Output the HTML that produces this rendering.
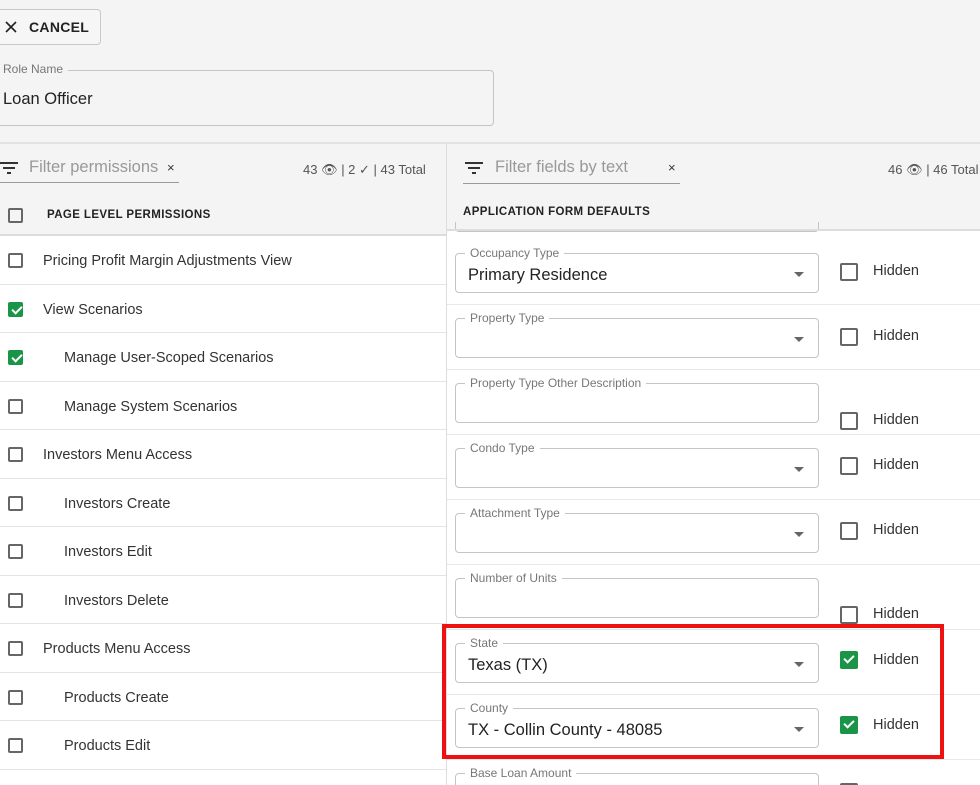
<!DOCTYPE html>
<html style="width:980px;height:785px;overflow:hidden"><head><meta charset="utf-8"><style>
*{box-sizing:border-box;margin:0;padding:0}
body{width:980px;height:785px;overflow:hidden;background:#f4f4f4;font-family:"Liberation Sans",Arial,sans-serif;color:#222;position:relative}
.a{position:absolute}
.cb{position:absolute;width:16px;height:16px;border:2px solid #666;border-radius:2px;background:#fff}
.cb.on{background:#1a9446;border-color:#1a9446}
.cb.on::after{content:"";position:absolute;left:4px;top:0px;width:4px;height:8px;border:solid #fff;border-width:0 2px 2px 0;transform:rotate(45deg)}
.row{position:absolute;left:0;width:446px;height:48.5px;background:#fff;border-bottom:1px solid #e4e4e4;font-size:14.5px;color:#333}
.row span{position:absolute;top:17px}
.row .cb{left:8px;top:17px;width:15px;height:15px}
.rrow{position:absolute;left:447px;width:533px;height:65px;background:#fff;border-bottom:1px solid #e8e8e8}
.fld{position:absolute;left:8px;top:13px;width:364px;height:40px;border:1px solid #c4c4c4;border-radius:4px}
.fld label{position:absolute;left:9px;top:-8px;font-size:12px;color:#777;background:#fff;padding:0 5px;line-height:14px}
.fld .v{position:absolute;left:12px;top:12px;font-size:16.5px;color:#222}
.fld .ar{position:absolute;right:14px;top:18px;width:0;height:0;border-left:5px solid transparent;border-right:5px solid transparent;border-top:5px solid #666}
.rrow .cb{left:393px;width:18px;height:18px}
.hid{position:absolute;left:426px;font-size:14.5px;color:#333}
</style></head><body>
<div class="a" style="left:-10px;top:9px;width:111px;height:36px;border:1px solid #c8c8c8;border-radius:4px;background:#f6f6f6"></div>
<svg class="a" style="left:5px;top:21px" width="12" height="12"><path d="M1 1L11 11M11 1L1 11" stroke="#222" stroke-width="1.6"/></svg>
<div class="a" style="left:29px;top:19px;font-size:14px;font-weight:bold;letter-spacing:.3px;color:#222">CANCEL</div>
<div class="a" style="left:-10px;top:70px;width:504px;height:56px;border:1px solid #c4c4c4;border-radius:4px"></div>
<div class="a" style="left:0;top:62px;font-size:12px;color:#777;background:#f4f4f4;padding:0 5px 0 3px">Role Name</div>
<div class="a" style="left:3px;top:90px;font-size:16.5px;color:#222">Loan Officer</div>
<div class="a" style="left:0;top:142px;width:980px;height:2px;background:#e2e2e2"></div>

<svg class="a" style="left:0;top:161px" width="20" height="14"><path d="M0 2H18M3 7H15M7 12H11" stroke="#333" stroke-width="2"/></svg>
<div class="a" style="left:29px;top:158px;font-size:16.5px;color:#999">Filter permissions</div>
<div class="a" style="left:167px;top:160px;font-size:13px;color:#333">×</div>
<div class="a" style="left:0;top:182px;width:179px;height:1px;background:#999"></div>
<div class="a" style="left:303px;top:162px;font-size:13px;color:#555;white-space:nowrap">43 👁 | 2 ✓ | 43 Total</div>
<div class="cb" style="left:8px;top:208px;width:15px;height:15px;background:none"></div>
<div class="a" style="left:47px;top:209px;font-size:11.5px;font-weight:bold;letter-spacing:.4px;color:#222">PAGE LEVEL PERMISSIONS</div>
<div class="a" style="left:0;top:234px;width:446px;height:2px;background:#ddd"></div>

<div class="row" style="top:236px"><div class="cb"></div><span style="left:43px">Pricing Profit Margin Adjustments View</span></div>
<div class="row" style="top:284.5px"><div class="cb on"></div><span style="left:43px">View Scenarios</span></div>
<div class="row" style="top:333px"><div class="cb on"></div><span style="left:64px">Manage User-Scoped Scenarios</span></div>
<div class="row" style="top:381.5px"><div class="cb"></div><span style="left:64px">Manage System Scenarios</span></div>
<div class="row" style="top:430px"><div class="cb"></div><span style="left:43px">Investors Menu Access</span></div>
<div class="row" style="top:478.5px"><div class="cb"></div><span style="left:64px">Investors Create</span></div>
<div class="row" style="top:527px"><div class="cb"></div><span style="left:64px">Investors Edit</span></div>
<div class="row" style="top:575.5px"><div class="cb"></div><span style="left:64px">Investors Delete</span></div>
<div class="row" style="top:624px"><div class="cb"></div><span style="left:43px">Products Menu Access</span></div>
<div class="row" style="top:672.5px"><div class="cb"></div><span style="left:64px">Products Create</span></div>
<div class="row" style="top:721px"><div class="cb"></div><span style="left:64px">Products Edit</span></div>
<div class="row" style="top:769.5px;height:15.5px;border:none"></div>

<div class="a" style="left:446px;top:144px;width:1px;height:641px;background:#ddd"></div>
<svg class="a" style="left:465px;top:161px" width="20" height="14"><path d="M0 2H18M3 7H15M7 12H11" stroke="#333" stroke-width="2"/></svg>
<div class="a" style="left:495px;top:158px;font-size:16.5px;color:#999">Filter fields by text</div>
<div class="a" style="left:668px;top:160px;font-size:13px;color:#333">×</div>
<div class="a" style="left:463px;top:183px;width:217px;height:1px;background:#999"></div>
<div class="a" style="left:888px;top:162px;font-size:13px;color:#555;white-space:nowrap">46 👁 | 46 Total</div>
<div class="a" style="left:463px;top:206px;font-size:11.5px;font-weight:bold;letter-spacing:.4px;color:#222">APPLICATION FORM DEFAULTS</div>
<div class="a" style="left:447px;top:229px;width:533px;height:11px;background:#fff"></div>
<div class="a" style="left:455px;top:222px;width:364px;height:10px;border:1px solid #c4c4c4;border-top:none;border-radius:0 0 4px 4px"></div>
<div class="a" style="left:447px;top:229px;width:533px;height:2px;background:#ddd"></div>

<div class="rrow" style="top:240px"><div class="fld"><label>Occupancy Type</label><div class="v">Primary Residence</div><div class="ar"></div></div><div class="cb" style="top:23px"></div><div class="hid" style="top:23px">Hidden</div></div>
<div class="rrow" style="top:305px"><div class="fld"><label>Property Type</label><div class="ar"></div></div><div class="cb" style="top:23px"></div><div class="hid" style="top:23px">Hidden</div></div>
<div class="rrow" style="top:370px"><div class="fld"><label>Property Type Other Description</label></div><div class="cb" style="top:42px"></div><div class="hid" style="top:42px">Hidden</div></div>
<div class="rrow" style="top:435px"><div class="fld"><label>Condo Type</label><div class="ar"></div></div><div class="cb" style="top:22px"></div><div class="hid" style="top:22px">Hidden</div></div>
<div class="rrow" style="top:500px"><div class="fld"><label>Attachment Type</label><div class="ar"></div></div><div class="cb" style="top:22px"></div><div class="hid" style="top:22px">Hidden</div></div>
<div class="rrow" style="top:565px"><div class="fld"><label>Number of Units</label></div><div class="cb" style="top:41px"></div><div class="hid" style="top:41px">Hidden</div></div>
<div class="rrow" style="top:630px"><div class="fld"><label>State</label><div class="v">Texas (TX)</div><div class="ar"></div></div><div class="cb on" style="top:21px"></div><div class="hid" style="top:22px">Hidden</div></div>
<div class="rrow" style="top:695px"><div class="fld"><label>County</label><div class="v">TX - Collin County - 48085</div><div class="ar"></div></div><div class="cb on" style="top:21px"></div><div class="hid" style="top:22px">Hidden</div></div>
<div class="rrow" style="top:760px;height:25px;border:none"><div class="fld"><label>Base Loan Amount</label></div><div class="cb" style="top:23px"></div></div>
<div class="a" style="left:442px;top:624px;width:502px;height:135px;border:4px solid #ee1111"></div>
</body></html>
